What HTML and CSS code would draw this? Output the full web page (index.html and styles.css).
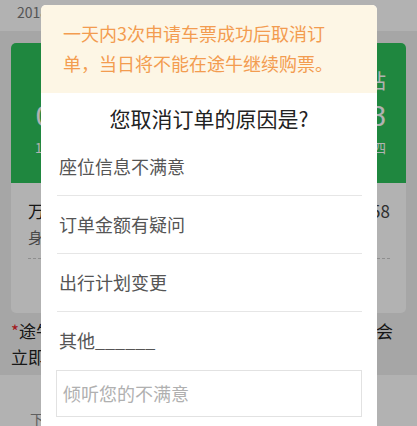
FILE: index.html
```html
<!DOCTYPE html>
<html lang="zh-CN">
<head>
    <meta charset="UTF-8">
    <meta name="viewport" content="width=device-width, initial-scale=1.0">
    <title>取消订单</title>
    <link rel="stylesheet" href="styles.css">
</head>
<body>
    <div class="topbar">2018-01-18 下单</div>

    <div class="page">
        <div class="ticket">
            <div class="ticket-head">
                <div class="station from">
                    <div class="name">上海</div>
                    <div class="time">06:38</div>
                    <div class="date">1月18日 周四</div>
                </div>
                <div class="train">G7008</div>
                <div class="station to">
                    <div class="name">南京南站</div>
                    <div class="time">08:08</div>
                    <div class="date">1月18日 周四</div>
                </div>
            </div>
            <div class="ticket-body">
                <div class="passenger">
                    <div class="pname">万小明</div>
                    <div class="price">二等座 ¥139.58</div>
                </div>
                <div class="idcard">身份证 3201**********1234</div>
                <div class="dash"></div>
            </div>
        </div>

        <p class="tip"><span class="star">*</span>途牛提交取消申请后，若铁路局审核通过，则将会立即为您办理退款，退款金额以实际为准。</p>
    </div>

    <div class="footer">下单时间 2018-01-18 06:12</div>

    <div class="mask"></div>

    <div class="dialog">
        <div class="notice">一天内3次申请车票成功后取消订单，当日将不能在途牛继续购票。</div>
        <div class="dialog-title">您取消订单的原因是?</div>
        <ul class="reasons">
            <li>座位信息不满意</li>
            <li>订单金额有疑问</li>
            <li>出行计划变更</li>
            <li class="other">其他______</li>
        </ul>
        <textarea class="feedback" placeholder="倾听您的不满意"></textarea>
    </div>
</body>
</html>
```

FILE: styles.css
```css
* {
    margin: 0;
    padding: 0;
    box-sizing: border-box;
}
body {
    background: #eeeeee;
    font-family: "Noto Sans CJK SC", "Noto Sans", sans-serif;
    color: #222222;
    overflow: hidden;
}
.topbar {
    height: 31px;
    background: #ffffff;
    padding-left: 17px;
    font-size: 14px;
    line-height: 25px;
    color: #7a7a7a;
}
.page {
    padding: 12px 11px 0;
}
.ticket {
    background: #ffffff;
    border-radius: 5px;
    overflow: hidden;
}
.ticket-head {
    background: #2dc25b;
    color: #ffffff;
    height: 140px;
    display: flex;
    justify-content: space-between;
    padding: 24px 20px 0 24px;
}
.station {
    display: flex;
    flex-direction: column;
    align-items: center;
}
.station.to {
    align-items: flex-end;
}
.station .name {
    font-size: 20px;
    line-height: 28px;
}
.station .time {
    font-family: "Liberation Sans", sans-serif;
    font-size: 30px;
    line-height: 42px;
}
.station .date {
    font-size: 13px;
    line-height: 22px;
}
.train {
    font-size: 16px;
    padding-top: 40px;
}
.ticket-body {
    height: 130px;
    padding: 14px 16px 0 17px;
}
.passenger {
    display: flex;
    justify-content: space-between;
    font-size: 17px;
    line-height: 28px;
}
.price {
    color: #444444;
}
.idcard {
    font-size: 15px;
    line-height: 24px;
    color: #666666;
}
.dash {
    margin-top: 9px;
    border-top: 1px dashed #cccccc;
}
.tip {
    font-size: 17px;
    line-height: 26px;
    padding-top: 5px;
    color: #222222;
}
.star {
    color: #e8262d;
}
.footer {
    margin-top: 5px;
    height: 60px;
    background: #ffffff;
    padding: 34px 0 0 30px;
    font-size: 14px;
    color: #888888;
}
.mask {
    position: fixed;
    top: 0;
    left: 0;
    right: 0;
    bottom: 0;
    background: rgba(0, 0, 0, 0.3);
}
.dialog {
    position: fixed;
    top: 5px;
    left: 41px;
    width: 336px;
    height: 440px;
    background: #ffffff;
    border-radius: 5px;
    overflow: hidden;
}
.notice {
    background: #fdf6e5;
    color: #f39c50;
    font-size: 18px;
    line-height: 30px;
    padding: 13px 20px 15px 22px;
}
.dialog-title {
    text-align: center;
    font-size: 21px;
    line-height: 40px;
    padding-top: 5px;
    color: #222222;
}
.reasons {
    list-style: none;
    margin: 0 15px 0 16px;
}
.reasons li {
    height: 58px;
    line-height: 57px;
    border-bottom: 1px solid #e6e6e6;
    font-size: 18px;
    color: #555555;
    padding-left: 2px;
}
.reasons li.other {
    border-bottom: none;
}
.feedback {
    display: block;
    margin: 0 15px;
    width: 306px;
    height: 47px;
    border: 1px solid #e2e2e2;
    padding: 9px 6px;
    font-family: "Noto Sans CJK SC", sans-serif;
    font-size: 18px;
    line-height: 26px;
    resize: none;
    outline: none;
}
.feedback::placeholder {
    color: #b0b0b0;
}
```
